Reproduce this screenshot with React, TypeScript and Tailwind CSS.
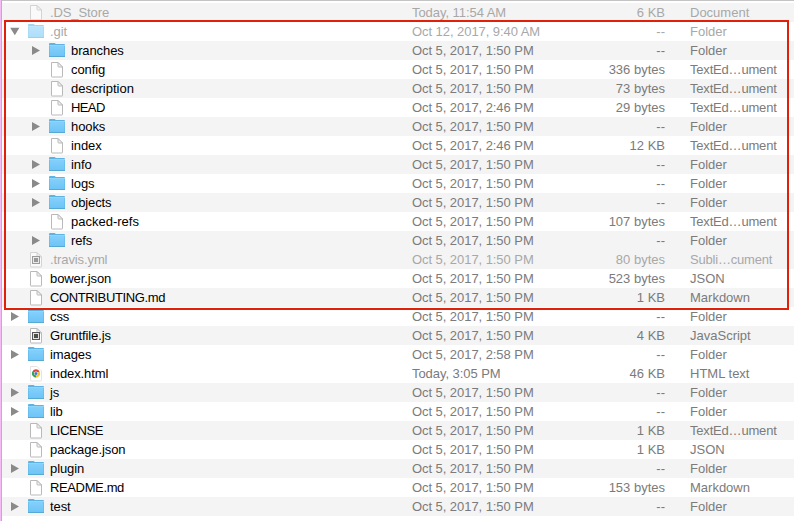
type Kind = 'folder' | 'file' | 'code' | 'chrome';
type Row = { name: string; kind: Kind; date?: string; size: string; type: string; depth?: number; dim?: boolean; open?: boolean; shaded?: boolean };

const usual = 'Oct 5, 2017, 1:50 PM';
const folder = (name: string, shaded: boolean, depth = 0, date = usual): Row => ({ name, kind: 'folder', date, size: '--', type: 'Folder', depth, shaded });

const rows: Row[] = [
  { name: '.DS_Store', kind: 'file', date: 'Today, 11:54 AM', size: '6 KB', type: 'Document', dim: true, shaded: true },
  { name: '.git', kind: 'folder', date: 'Oct 12, 2017, 9:40 AM', size: '--', type: 'Folder', dim: true, open: true },
  folder('branches', true, 1),
  { name: 'config', kind: 'file', size: '336 bytes', type: 'TextEd…ument', depth: 1 },
  { name: 'description', kind: 'file', size: '73 bytes', type: 'TextEd…ument', depth: 1, shaded: true },
  { name: 'HEAD', kind: 'file', date: 'Oct 5, 2017, 2:46 PM', size: '29 bytes', type: 'TextEd…ument', depth: 1 },
  folder('hooks', true, 1),
  { name: 'index', kind: 'file', date: 'Oct 5, 2017, 2:46 PM', size: '12 KB', type: 'TextEd…ument', depth: 1 },
  folder('info', true, 1),
  folder('logs', false, 1),
  folder('objects', true, 1),
  { name: 'packed-refs', kind: 'file', size: '107 bytes', type: 'TextEd…ument', depth: 1 },
  folder('refs', true, 1),
  { name: '.travis.yml', kind: 'code', size: '80 bytes', type: 'Subli…cument', dim: true, shaded: true },
  { name: 'bower.json', kind: 'file', size: '523 bytes', type: 'JSON' },
  { name: 'CONTRIBUTING.md', kind: 'file', size: '1 KB', type: 'Markdown', shaded: true },
  folder('css', false),
  { name: 'Gruntfile.js', kind: 'code', size: '4 KB', type: 'JavaScript', shaded: true },
  folder('images', false, 0, 'Oct 5, 2017, 2:58 PM'),
  { name: 'index.html', kind: 'chrome', date: 'Today, 3:05 PM', size: '46 KB', type: 'HTML text' },
  folder('js', true),
  folder('lib', false),
  { name: 'LICENSE', kind: 'file', size: '1 KB', type: 'TextEd…ument', shaded: true },
  { name: 'package.json', kind: 'file', size: '1 KB', type: 'JSON' },
  folder('plugin', true),
  { name: 'README.md', kind: 'file', size: '153 bytes', type: 'Markdown' },
  folder('test', true),
];

function Icon({ kind }: { kind: Kind }) {
  if (kind === 'folder') {
    return (
      <svg width="16" height="17" viewBox="0 0 16 17">
        <defs>
          <linearGradient id="folderBody" x1="0" y1="0" x2="0" y2="1">
            <stop offset="0" stopColor="#84cffa" />
            <stop offset="1" stopColor="#6cc5f7" />
          </linearGradient>
        </defs>
        <path d="M0 2.2Q0 1 1 1H5.4Q6.2 1 6.7 2H15Q16 2 16 3V15H0Z" fill="#5bb4e3" />
        <path d="M0.5 4H15.5V14H0.5Z" fill="url(#folderBody)" />
        <path d="M0 3.5H16" stroke="#8ed6fb" />
        <path d="M0 14.5H16" stroke="#57a9d3" />
      </svg>
    );
  }
  const edge = kind === 'chrome' ? '#e4e4e4' : '#b9b9b9';
  return (
    <svg width="16" height="17" viewBox="0 0 16 17">
      <path d="M2.5 1.5H9L13.5 6V15.5Q13.5 16 13 16H3Q2.5 16 2.5 15.5Z" fill="#fff" stroke={edge} />
      {kind !== 'chrome' && <path d="M9 1.5V5.3Q9 6 9.7 6H13.5Z" fill="#f1f1f1" stroke={edge} />}
      {kind === 'code' && (
        <>
          <rect x="4" y="5" width="8" height="8" fill="#555" />
          <rect x="5" y="6" width="6" height="6" fill="#e2e2e2" />
          <rect x="6" y="7" width="4" height="4" fill="#4d4d4d" />
        </>
      )}
      {kind === 'chrome' && (
        <>
          <path d="M8 8.4L4.4 6.4A4.1 4.1 0 0 1 11.6 6.4Z" fill="#de4437" />
          <path d="M8 8.4L11.6 6.4A4.1 4.1 0 0 1 8 12.5Z" fill="#f6c52d" />
          <path d="M8 8.4V12.5A4.1 4.1 0 0 1 4.4 6.4Z" fill="#34a05a" />
          <circle cx="8" cy="8.4" r="1.9" fill="#fff" />
          <circle cx="8" cy="8.4" r="1.5" fill="#4078d8" />
        </>
      )}
    </svg>
  );
}

function Disclosure({ open }: { open?: boolean }) {
  return (
    <svg width="10" height="11" viewBox="0 0 10 11" fill="#8a8a8a">
      <path d={open ? 'M.2 1.8H9.4L4.8 9.3Z' : 'M1 .9L9 5.5L1 10.1Z'} />
    </svg>
  );
}

function nameTracking(name: string) {
  if (name === 'HEAD') return 'tracking-[-0.6px]';
  if (/^[A-Z]{2}/.test(name)) return 'tracking-[-0.37px]';
  return name === 'description' || name === 'packed-refs' ? '' : 'tracking-[-0.1px]';
}

function FileRow({ row }: { row: Row }) {
  const meta = row.dim ? 'text-[#a8a8a8]' : 'text-[#7b7b7b]';
  return (
    <div className={`flex h-[19px] items-center leading-[19px] ${row.shaded ? 'bg-[#f4f4f4]' : 'bg-white'}`}>
      <div className={`flex h-full w-[410px] shrink-0 items-center ${row.depth ? 'pl-[29px]' : 'pl-2'}`}>
        <span className="flex w-[18px] shrink-0">{row.kind === 'folder' && <Disclosure open={row.open} />}</span>
        <span className={`flex w-[22px] shrink-0 ${row.dim ? 'opacity-55' : ''}`}><Icon kind={row.kind} /></span>
        <span className={`${nameTracking(row.name)} ${row.dim ? 'text-[#a8a8a8]' : 'text-black'}`}>{row.name}</span>
      </div>
      <div className={`w-[150px] shrink-0 tracking-[-0.06px] ${meta}`}>{row.date ?? usual}</div>
      <div className={`w-[103px] shrink-0 text-right ${meta}`}>{row.size}</div>
      <div className={`pl-[25px] ${row.type.includes('…') ? 'tracking-[-0.19px]' : ''} ${meta}`}>{row.type}</div>
    </div>
  );
}

export default function App() {
  return (
    <div className="relative flex h-[521px] w-[794px] overflow-hidden bg-white font-['Liberation_Sans',Arial,sans-serif] text-[13px] whitespace-nowrap">
      <div className="w-[2px] shrink-0 border-r border-[#bdb0bf] bg-[#f3bcf5]" />
      <div className="w-[792px] shrink-0">
        <div className="h-[3px] border-t border-[#c4c4c4] bg-white" />
        {rows.map((row) => <FileRow key={row.name} row={row} />)}
      </div>
      <div className="pointer-events-none absolute top-5 left-1 h-[290px] w-[785px] border-2 border-[#e02008]" />
    </div>
  );
}
